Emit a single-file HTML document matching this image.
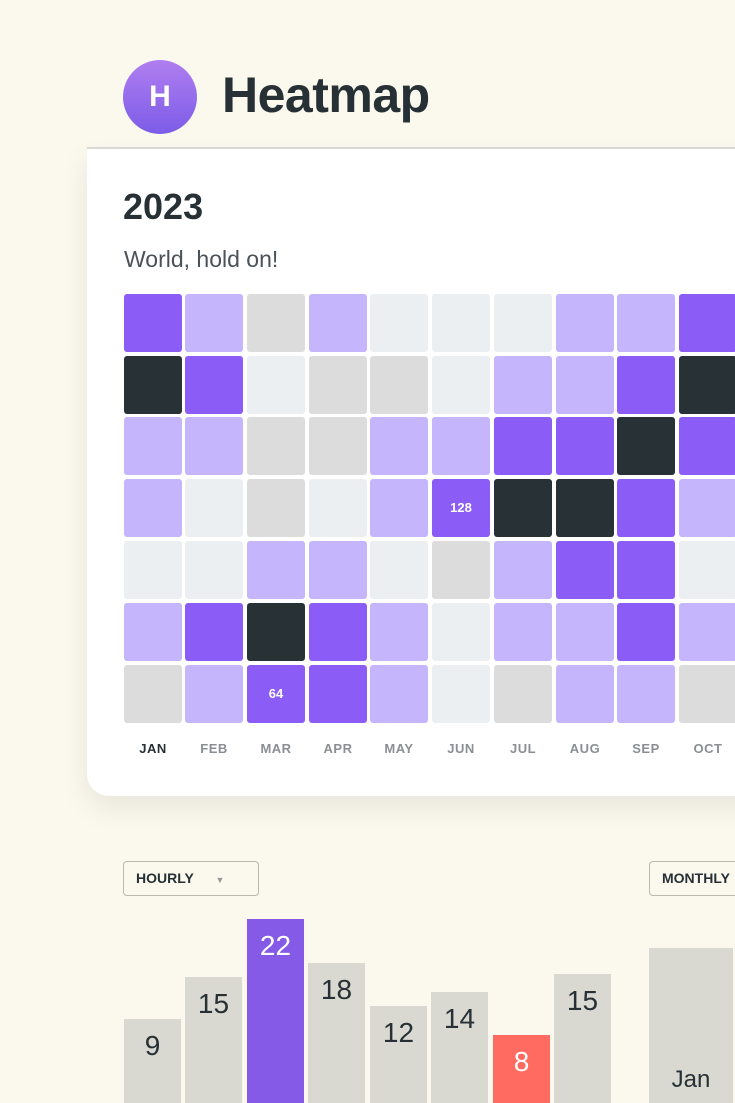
<!DOCTYPE html>
<html style="height:1103px;overflow:hidden"><head><style>
html,body{margin:0;width:735px;height:1103px;overflow:hidden}
body{background:#fbf8ee;font-family:"Liberation Sans",sans-serif;position:relative}
.a{position:absolute}
.logo{left:123px;top:60px;width:74px;height:74px;border-radius:50%;background:linear-gradient(#b07ef0,#7c5ce8);color:#fff;font-weight:bold;font-size:30px;text-align:center;line-height:74px}
.title{left:222px;top:66px;font-size:50px;font-weight:bold;color:#263035;letter-spacing:-0.5px}
.hl{left:87px;top:147px;width:648px;height:2px;background:#dcdcd4}
.card{left:87px;top:149px;width:700px;height:647px;background:#fff;border-radius:0 0 0 22px;box-shadow:0 12px 30px rgba(0,0,0,.08)}
.c{position:absolute;width:58px;height:58px;border-radius:3px;color:#fff;font-size:13px;font-weight:bold;text-align:center;line-height:58px}
.P{background:#8b5cf6}.L{background:#c4b5fd}.G{background:#dcdcdc}.W{background:#eceff1}.D{background:#283236}
.m{position:absolute;top:741px;width:58px;text-align:center;font-size:13px;font-weight:bold;color:#8a8f93;letter-spacing:.5px}
.b{position:absolute;bottom:0;width:57px;background:#d9d8d1;color:#263035;font-size:28px;text-align:center}
.btn{border:1.5px solid #b9b9b0;border-radius:4px;height:35px;line-height:33px;font-size:14px;font-weight:bold;color:#263035;padding-left:12px;box-sizing:border-box}
</style></head><body>
<div class="a logo">H</div>
<div class="a title">Heatmap</div>
<div class="a hl"></div>
<div class="a card"></div>
<div class="a" style="left:123px;top:186px;font-size:36px;font-weight:bold;color:#263035">2023</div>
<div class="a" style="left:124px;top:246px;font-size:23px;color:#4a5257">World, hold on!</div>
<div id="g"></div>
<div class="a btn" style="left:123px;top:861px;width:136px">HOURLY <span style="color:#999;font-size:9px;margin-left:18px">▼</span></div>
<div class="a btn" style="left:649px;top:861px;width:100px">MONTHLY</div>
<div class="b" style="left:124px;height:84px;line-height:54px">9</div>
<div class="b" style="left:185px;height:126px;line-height:54px">15</div>
<div class="b" style="left:247px;height:184px;background:#845ae6;color:#fff;line-height:54px">22</div>
<div class="b" style="left:308px;height:140px;line-height:54px">18</div>
<div class="b" style="left:370px;height:97px;line-height:54px">12</div>
<div class="b" style="left:431px;height:111px;line-height:54px">14</div>
<div class="b" style="left:493px;height:68px;background:#ff6b61;color:#fff;line-height:54px">8</div>
<div class="b" style="left:554px;height:129px;line-height:54px">15</div>
<div class="b" style="left:649px;width:84px;height:155px;font-size:24px;line-height:264px">Jan</div>
<script>
var rows=["PLGLWWWLLP","DPWGGWLLPD","LLGGLLPPDP","LWGWLPDDPL","WWLLWGLPPW","LPDPLWLLPL","GLPPLWGLLG"];
var xs=[124,185,247,309,370,432,494,556,617,679],ys=[294,356,417,479,541,603,665];
var h="";
rows.forEach(function(r,i){for(var j=0;j<10;j++){var t="";if(i==3&&j==5)t="128";if(i==6&&j==2)t="64";h+='<div class="c '+r[j]+'" style="left:'+xs[j]+'px;top:'+ys[i]+'px">'+t+'</div>';}});
"JAN FEB MAR APR MAY JUN JUL AUG SEP OCT".split(" ").forEach(function(m,j){h+='<div class="m" style="left:'+xs[j]+'px;'+(j==0?'color:#263035':'')+'">'+m+'</div>';});
document.getElementById("g").innerHTML=h;
</script>
</body></html>
